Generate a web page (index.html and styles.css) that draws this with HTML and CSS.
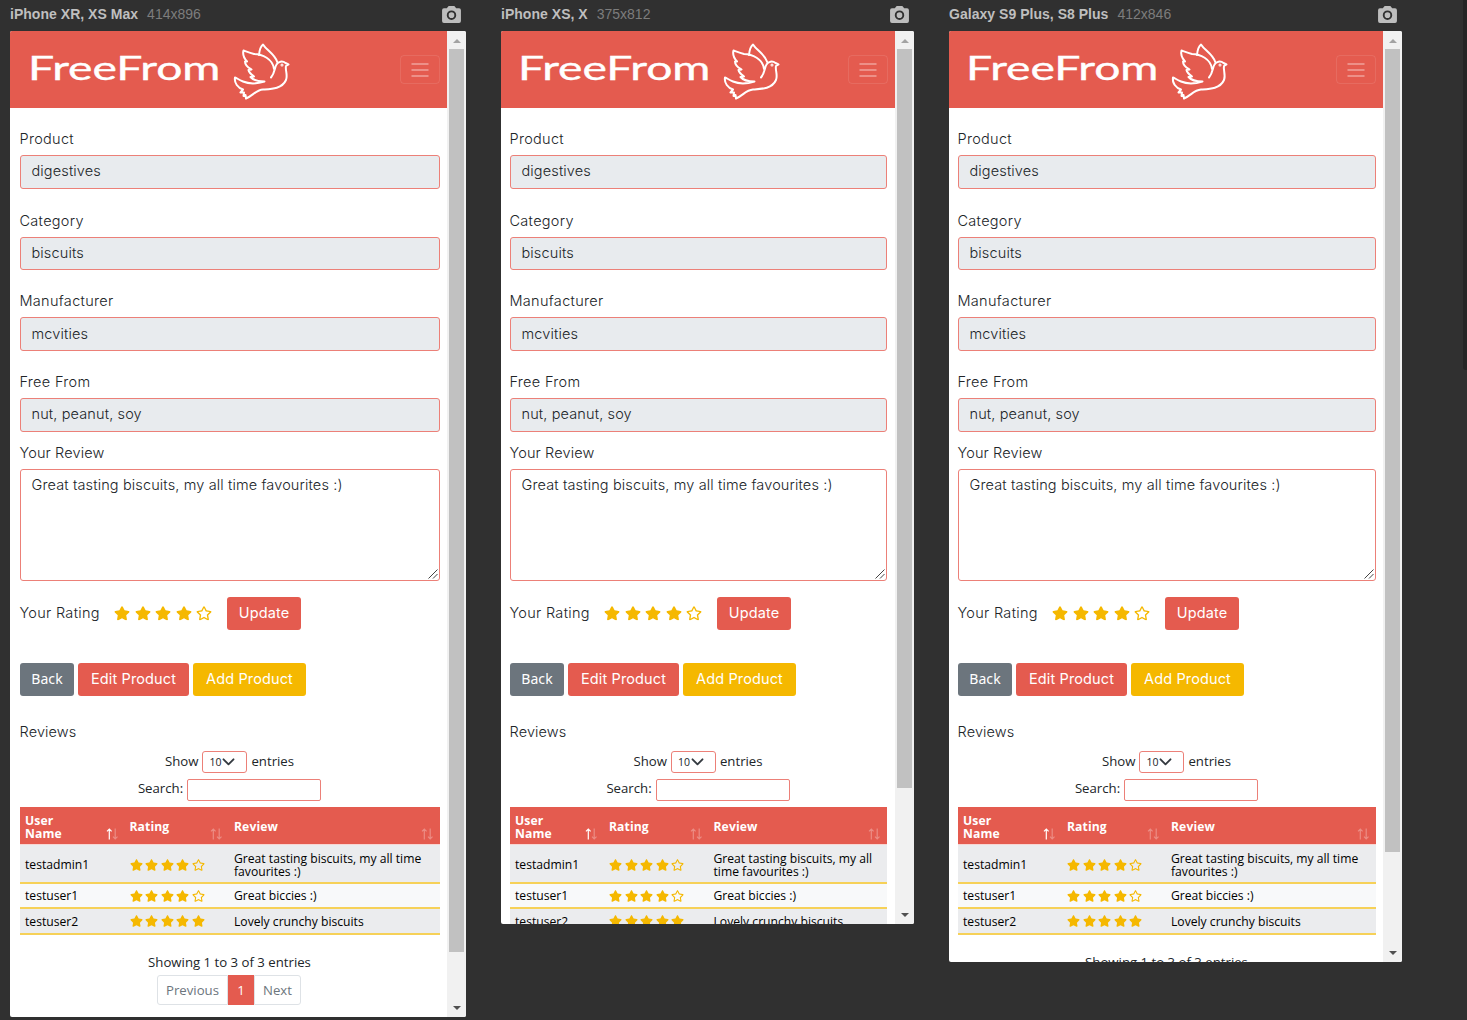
FILE: index.html
```html
<!DOCTYPE html>
<html lang="en">
<head>
<meta charset="utf-8">
<title>FreeFrom device preview</title>
<link rel="stylesheet" href="styles.css">
</head>
<body>
<svg class="sprite" aria-hidden="true">
  <symbol id="star" viewBox="0 0 576 512"><path d="M259 18 194 150 48 171c-26 4-37 36-18 55l106 103-25 145c-4 26 23 46 46 34l131-69 131 69c23 12 50-8 46-34l-25-145 106-103c19-19 8-51-18-55l-146-21-65-132c-12-24-46-24-58 0z"/></symbol>
  <symbol id="star-o" viewBox="0 0 576 512"><path d="M528 171 382 150 317 18c-12-24-46-24-58 0l-65 132-146 21c-26 4-37 36-18 55l106 103-25 145c-4 26 23 46 46 34l131-69 131 69c23 12 50-8 46-34l-25-145 106-103c19-19 8-51-18-55zM388 312l24 138-124-65-124 65 24-138-101-98 139-20 62-126 62 126 139 20z"/></symbol>
  <symbol id="camera" viewBox="0 0 20 18"><path fill-rule="evenodd" d="M7 0h6l2 2.400h3a2 2 0 0 1 2 2V16a2 2 0 0 1-2 2H2a2 2 0 0 1-2-2V4.400a2 2 0 0 1 2-2h3zM10 4.700a5 5 0 1 0 0 10 5 5 0 0 0 0-10zm0 2a3 3 0 1 1 0 6 3 3 0 0 1 0-6z"/></symbol>
  <symbol id="dove" viewBox="0 0 75 70"><g fill="none" stroke="#fff" stroke-width="2" stroke-linecap="round" stroke-linejoin="round"><path d="M49 34C48 24 37 19 29 19 25 18 20 16 18.500 15.500 17.500 19 19 23 22 26.500L20 26.500C20 31 24 33 26.500 34.500L23.500 35C24 38 27 40 29 41.500L25.500 42C28 45 34 46.500 39.500 46.500C33 48.500 24 49 18 46.500C13 44.500 12 43 10 42.500C9 48 13 53 18 54.500L15.500 57.500 19 57.500 18.500 61 20.500 60 21 63.500C28 60.500 31 55 38 54.500C46 54 57 54 61 45C63 40 60 35 61 31L63.500 29.500 60.500 28C57.500 25.500 53 26.500 51.500 29.500C49.500 32.500 50 38 46 42.500"/><path d="M34 20C34.500 15 36 11 38 9.500C42 16 49.500 18.500 52.500 27.500"/><circle cx="57" cy="30" r=".5"/></g></symbol>
  <symbol id="sort" viewBox="0 0 12 12"><path d="M3.300 11.500V1M1 3.300 3.300 1l2.300 2.300M9.200.5V11M7 8.700 9.200 11l2.300-2.300" fill="none" stroke="#fff" stroke-width="1.200" opacity=".3"/></symbol>
  <symbol id="sort-asc" viewBox="0 0 12 12"><path d="M3.300 11.500V1M1 3.300 3.300 1l2.300 2.300" fill="none" stroke="#fff" stroke-width="1.200"/><path d="M9.200.5V11M7 8.700 9.200 11l2.300-2.300" fill="none" stroke="#fff" stroke-width="1.200" opacity=".3"/></symbol>
  <symbol id="grip" viewBox="0 0 10 10"><path d="M.5 9.500l9-9M5 9.500 9.500 5" fill="none" stroke="#444" stroke-width="1"/></symbol>
  <symbol id="chevron" viewBox="0 0 12 8"><path d="M1 1.300l5 5 5-5" fill="none" stroke="#343a40" stroke-width="1.900" stroke-linecap="round" stroke-linejoin="round"/></symbol>
  <symbol id="menu" viewBox="0 0 18 14"><path d="M.5 1h17M.5 7h17M.5 13h17" fill="none" stroke="#fff" stroke-width="1.200" opacity=".65"/></symbol>
</svg>

<main class="devices">
  <section class="device xr">
    <div class="device-bar"><b>iPhone XR, XS Max</b><span>414x896</span><svg class="camera"><use href="#camera"/></svg></div>
    <div class="screen">
      <div class="page">
        <header class="navbar"><div class="brand"><span>FreeFrom</span></div><svg class="dove"><use href="#dove"/></svg><div class="toggler"><svg><use href="#menu"/></svg></div></header>
        <div class="content">
          <div class="field first"><label>Product</label><div class="control">digestives</div></div>
          <div class="field second"><label>Category</label><div class="control">biscuits</div></div>
          <div class="field third"><label>Manufacturer</label><div class="control">mcvities</div></div>
          <div class="field last"><label>Free From</label><div class="control">nut, peanut, soy</div></div>
          <div class="review"><label>Your Review</label><div class="control area">Great tasting biscuits, my all time favourites :)<svg class="grip"><use href="#grip"/></svg></div></div>
          <div class="rating-row"><label>Your Rating</label><div class="stars"><svg><use href="#star"/></svg><svg><use href="#star"/></svg><svg><use href="#star"/></svg><svg><use href="#star"/></svg><svg><use href="#star-o"/></svg></div><div class="btn red update">Update</div></div>
          <div class="actions"><div class="btn gray back">Back</div><div class="btn red edit">Edit Product</div><div class="btn yellow add">Add Product</div></div>
          <h2>Reviews</h2>
          <div class="length"><span>Show</span><div class="select">10<svg><use href="#chevron"/></svg></div><span>entries</span></div>
          <div class="filter"><span>Search:</span><div class="search"></div></div>
          <div class="table">
            <div class="tr th"><div>User<br>Name<svg><use href="#sort-asc"/></svg></div><div>Rating<svg><use href="#sort"/></svg></div><div>Review<svg><use href="#sort"/></svg></div></div>
            <div class="tr odd tall"><div>testadmin1</div><div class="stars small"><svg><use href="#star"/></svg><svg><use href="#star"/></svg><svg><use href="#star"/></svg><svg><use href="#star"/></svg><svg><use href="#star-o"/></svg></div><div>Great tasting biscuits, my all time<br>favourites :)</div></div>
            <div class="tr"><div>testuser1</div><div class="stars small"><svg><use href="#star"/></svg><svg><use href="#star"/></svg><svg><use href="#star"/></svg><svg><use href="#star"/></svg><svg><use href="#star-o"/></svg></div><div>Great biccies :)</div></div>
            <div class="tr odd final"><div>testuser2</div><div class="stars small"><svg><use href="#star"/></svg><svg><use href="#star"/></svg><svg><use href="#star"/></svg><svg><use href="#star"/></svg><svg><use href="#star"/></svg></div><div>Lovely crunchy biscuits</div></div>
          </div>
          <div class="info">Showing 1 to 3 of 3 entries</div>
          <div class="pagination"><span class="prev">Previous</span><span class="current">1</span><span class="next">Next</span></div>
        </div>
      </div>
      <div class="scrollbar"><i class="up"></i><div class="thumb"></div><i class="down"></i></div>
    </div>
  </section>

  <section class="device xs">
    <div class="device-bar"><b>iPhone XS, X</b><span>375x812</span><svg class="camera"><use href="#camera"/></svg></div>
    <div class="screen">
      <div class="page">
        <header class="navbar"><div class="brand"><span>FreeFrom</span></div><svg class="dove"><use href="#dove"/></svg><div class="toggler"><svg><use href="#menu"/></svg></div></header>
        <div class="content">
          <div class="field first"><label>Product</label><div class="control">digestives</div></div>
          <div class="field second"><label>Category</label><div class="control">biscuits</div></div>
          <div class="field third"><label>Manufacturer</label><div class="control">mcvities</div></div>
          <div class="field last"><label>Free From</label><div class="control">nut, peanut, soy</div></div>
          <div class="review"><label>Your Review</label><div class="control area">Great tasting biscuits, my all time favourites :)<svg class="grip"><use href="#grip"/></svg></div></div>
          <div class="rating-row"><label>Your Rating</label><div class="stars"><svg><use href="#star"/></svg><svg><use href="#star"/></svg><svg><use href="#star"/></svg><svg><use href="#star"/></svg><svg><use href="#star-o"/></svg></div><div class="btn red update">Update</div></div>
          <div class="actions"><div class="btn gray back">Back</div><div class="btn red edit">Edit Product</div><div class="btn yellow add">Add Product</div></div>
          <h2>Reviews</h2>
          <div class="length"><span>Show</span><div class="select">10<svg><use href="#chevron"/></svg></div><span>entries</span></div>
          <div class="filter"><span>Search:</span><div class="search"></div></div>
          <div class="table">
            <div class="tr th"><div>User<br>Name<svg><use href="#sort-asc"/></svg></div><div>Rating<svg><use href="#sort"/></svg></div><div>Review<svg><use href="#sort"/></svg></div></div>
            <div class="tr odd tall"><div>testadmin1</div><div class="stars small"><svg><use href="#star"/></svg><svg><use href="#star"/></svg><svg><use href="#star"/></svg><svg><use href="#star"/></svg><svg><use href="#star-o"/></svg></div><div>Great tasting biscuits, my all<br>time favourites :)</div></div>
            <div class="tr"><div>testuser1</div><div class="stars small"><svg><use href="#star"/></svg><svg><use href="#star"/></svg><svg><use href="#star"/></svg><svg><use href="#star"/></svg><svg><use href="#star-o"/></svg></div><div>Great biccies :)</div></div>
            <div class="tr odd final"><div>testuser2</div><div class="stars small"><svg><use href="#star"/></svg><svg><use href="#star"/></svg><svg><use href="#star"/></svg><svg><use href="#star"/></svg><svg><use href="#star"/></svg></div><div>Lovely crunchy biscuits</div></div>
          </div>
        </div>
      </div>
      <div class="scrollbar"><i class="up"></i><div class="thumb"></div><i class="down"></i></div>
    </div>
  </section>

  <section class="device s9">
    <div class="device-bar"><b>Galaxy S9 Plus, S8 Plus</b><span>412x846</span><svg class="camera"><use href="#camera"/></svg></div>
    <div class="screen">
      <div class="page">
        <header class="navbar"><div class="brand"><span>FreeFrom</span></div><svg class="dove"><use href="#dove"/></svg><div class="toggler"><svg><use href="#menu"/></svg></div></header>
        <div class="content">
          <div class="field first"><label>Product</label><div class="control">digestives</div></div>
          <div class="field second"><label>Category</label><div class="control">biscuits</div></div>
          <div class="field third"><label>Manufacturer</label><div class="control">mcvities</div></div>
          <div class="field last"><label>Free From</label><div class="control">nut, peanut, soy</div></div>
          <div class="review"><label>Your Review</label><div class="control area">Great tasting biscuits, my all time favourites :)<svg class="grip"><use href="#grip"/></svg></div></div>
          <div class="rating-row"><label>Your Rating</label><div class="stars"><svg><use href="#star"/></svg><svg><use href="#star"/></svg><svg><use href="#star"/></svg><svg><use href="#star"/></svg><svg><use href="#star-o"/></svg></div><div class="btn red update">Update</div></div>
          <div class="actions"><div class="btn gray back">Back</div><div class="btn red edit">Edit Product</div><div class="btn yellow add">Add Product</div></div>
          <h2>Reviews</h2>
          <div class="length"><span>Show</span><div class="select">10<svg><use href="#chevron"/></svg></div><span>entries</span></div>
          <div class="filter"><span>Search:</span><div class="search"></div></div>
          <div class="table">
            <div class="tr th"><div>User<br>Name<svg><use href="#sort-asc"/></svg></div><div>Rating<svg><use href="#sort"/></svg></div><div>Review<svg><use href="#sort"/></svg></div></div>
            <div class="tr odd tall"><div>testadmin1</div><div class="stars small"><svg><use href="#star"/></svg><svg><use href="#star"/></svg><svg><use href="#star"/></svg><svg><use href="#star"/></svg><svg><use href="#star-o"/></svg></div><div>Great tasting biscuits, my all time<br>favourites :)</div></div>
            <div class="tr"><div>testuser1</div><div class="stars small"><svg><use href="#star"/></svg><svg><use href="#star"/></svg><svg><use href="#star"/></svg><svg><use href="#star"/></svg><svg><use href="#star-o"/></svg></div><div>Great biccies :)</div></div>
            <div class="tr odd final"><div>testuser2</div><div class="stars small"><svg><use href="#star"/></svg><svg><use href="#star"/></svg><svg><use href="#star"/></svg><svg><use href="#star"/></svg><svg><use href="#star"/></svg></div><div>Lovely crunchy biscuits</div></div>
          </div>
          <div class="info">Showing 1 to 3 of 3 entries</div>
        </div>
      </div>
      <div class="scrollbar"><i class="up"></i><div class="thumb"></div><i class="down"></i></div>
    </div>
  </section>
</main>
<aside class="app-scroll"></aside>
</body>
</html>
```
FILE: styles.css
```css
* { box-sizing: border-box; }
body { margin: 0; height: 1020px; overflow: hidden; background: #303030; display: flex; justify-content: space-between; color: #212529; font-family: "Open Sans", "Noto Sans", sans-serif; }
.sprite { position: absolute; width: 0; height: 0; }
.devices { display: flex; align-items: flex-start; gap: 35px; padding-left: 10px; }
.app-scroll { width: 4px; height: 370px; background: #252525; border-radius: 0 0 0 3px; }

.device { flex: none; --c1: 104.5px; --c2: 104.5px; --pad: 9px; }
.xr { width: 456px; --h: 986px; --thumb: 903px; --pad: 10px; }
.xs { width: 413px; --h: 893px; --thumb: 739px; --c1: 94px; }
.s9 { width: 453px; --h: 931px; --thumb: 803px; --c1: 104px; --c2: 104px; }
.device-bar { height: 31px; display: flex; align-items: center; padding: 0 5px 3px 0; font: 14px "Liberation Sans", Arial, sans-serif; color: #7d7d7d; gap: 9px; }
.device-bar b { color: #bfbfbf; letter-spacing: .03px; }
.camera { width: 19px; height: 17px; margin-left: auto; fill: #bdbdbd; }
.screen { display: flex; height: var(--h); overflow: hidden; border-radius: 2px; background: #fff; }
.page { flex: 1; min-width: 0; overflow: hidden; }

.scrollbar { width: 19px; background: #f1f1f1; display: flex; flex-direction: column; align-items: center; padding: 8px 0 7px; }
.scrollbar i { width: 0; height: 0; border: 4px solid transparent; }
.scrollbar .up { border-top: 0; border-bottom-color: #a3a3a3; margin-bottom: 6px; }
.scrollbar .down { border-bottom: 0; border-top-color: #505050; margin-top: auto; }
.thumb { width: 15px; height: var(--thumb); background: #c1c1c1; }

.navbar { height: 77px; background: #e45b4f; display: flex; align-items: center; padding: 0 7px 0 calc(var(--pad) + 8px); }
.brand { width: 191px; color: #fff; font: 33px/40px Lato, sans-serif; padding-bottom: 6px; -webkit-text-stroke: .4px #fff; }
.brand span { display: inline-block; transform-origin: 0 50%; transform: scaleX(1.400); }
.dove { width: 75px; height: 70px; margin-left: 6px; }
.toggler { margin-left: auto; width: 40px; height: 29px; border: 1px solid rgba(255,255,255,.1); border-radius: 4px; display: flex; align-items: center; justify-content: center; }
.toggler svg { width: 18px; height: 14px; }

.content { padding: 20px 7px 0 var(--pad); font-size: 13.200px; }
.xs .content { padding-right: 8px; }
label, h2, .control, .btn { font-family: Inter, sans-serif; font-size: 14.500px; font-weight: 300; line-height: 22px; letter-spacing: .13px; margin: 0; }
label, h2 { text-indent: -.5px; }
.field { height: 81px; }
.field label { letter-spacing: .3px; }
.first { height: 82px; }
.second { height: 80px; }
.second .control { height: 33px; }
.third .control { padding-top: 5px; }
.last { height: 71px; }
label { display: block; height: 27px; }
.control { height: 34px; border: 1px solid #ec8078; border-radius: 3px; background: #e8ebee; padding: 4px 10.500px; white-space: nowrap; }
.area { height: 112px; background: #fff; position: relative; }
.grip { position: absolute; right: 1px; bottom: 1px; width: 10px; height: 10px; }
.review { padding-bottom: 16px; }
.rating-row { display: flex; align-items: center; height: 33px; }
.rating-row label { width: 94px; height: 23px; letter-spacing: .3px; }
.stars { display: flex; align-items: center; gap: 4.600px; fill: #f5b800; width: 113px; }
.stars svg { width: 16px; height: 14.500px; }
.btn { height: 33px; border-radius: 3px; color: #fff; text-align: center; line-height: 31px; font-weight: 400; white-space: nowrap; }
.red { background: #e45b4f; }
.gray { background: #6c757d; }
.yellow { background: #f5b800; }
.update { width: 74px; }
.actions { display: flex; gap: 4px; margin-top: 33px; }
.back { width: 54px; font-family: "Noto Sans", sans-serif; font-size: 14px; }
.edit { width: 111px; }
.add { width: 113px; }
h2 { margin-top: 25px; }

.length, .filter { display: flex; justify-content: center; align-items: center; gap: 4px; line-height: 20px; padding-right: 1px; }
.length { margin-top: 8px; height: 22px; }
.length span { padding-bottom: 2px; }
.select { width: 45px; height: 22px; border: 1px solid #ec8078; border-radius: 3px; font-size: 10.500px; padding: 0 0 1px 6px; display: flex; align-items: center; gap: 1px; }
.select svg { width: 13px; height: 8px; }
.filter { margin-top: 5px; height: 23px; }
.filter span { padding-bottom: 4px; }
.search { width: 134px; height: 22px; border: 1px solid #ec8078; border-radius: 2px; }

.table { margin-top: 6px; font-size: 12.150px; line-height: 13px; color: #000; }
.tr { display: grid; grid-template-columns: var(--c1) var(--c2) 1fr; height: 25px; background: #f8f9fa; border-bottom: 2px solid #f6d158; align-items: center; }
.tr > div { padding-left: 5px; white-space: nowrap; }
.tall { height: 39px; padding-top: 2px; }
.odd { background: #ebecee; }
.final { height: 26px; }
.th { height: 38px; background: #e45b4f; color: #fff; font-weight: 700; border-bottom: 1px solid #f8d5d2; }
.th > div { position: relative; height: 100%; display: flex; align-items: center; letter-spacing: .1px; padding-top: 2px; }
.th svg { position: absolute; right: 7px; bottom: 4px; width: 12px; height: 12px; }
.small { gap: 2.500px; width: auto; }
.small svg { width: 13px; height: 12px; }
.info { margin-top: 17px; text-align: center; line-height: 20px; padding-right: 1px; }
.pagination { display: flex; justify-content: center; margin-top: 3px; line-height: 28px; color: #6c757d; text-align: center; padding-right: 2px; }
.pagination span { height: 30px; border: 1px solid #dee2e6; }
.pagination .prev { width: 71px; border-radius: 3px 0 0 3px; }
.pagination .current { width: 26px; background: #e45b4f; border-color: #e45b4f; color: #fff; }
.pagination .next { width: 47px; border-radius: 0 3px 3px 0; }
```
